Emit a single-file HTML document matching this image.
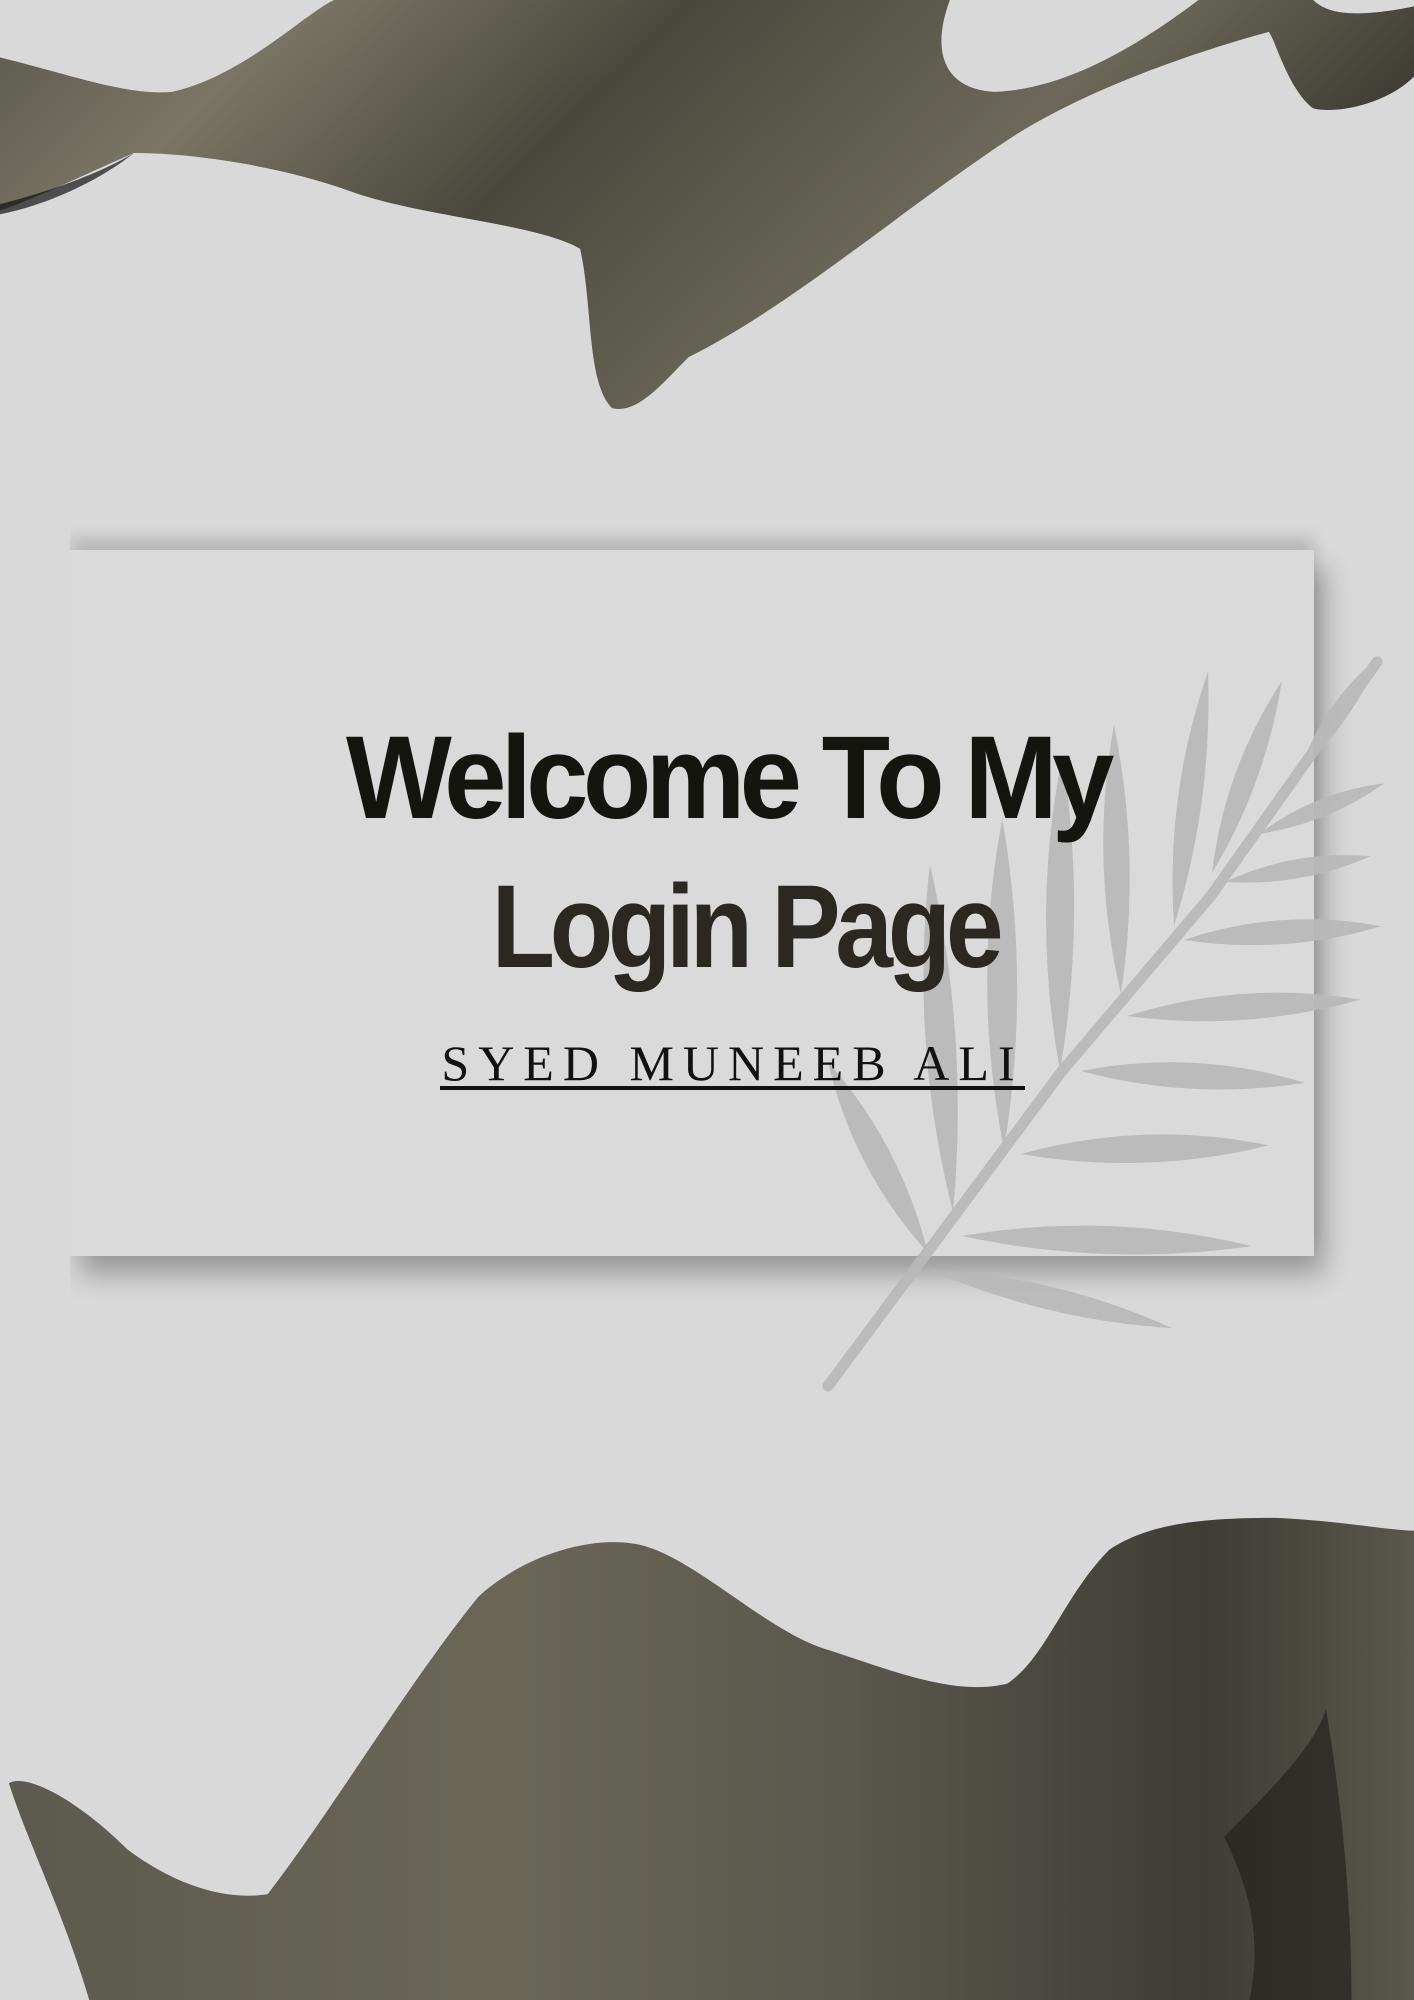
<!DOCTYPE html>
<html><head><meta charset="utf-8">
<style>
html,body{margin:0;padding:0;}
body{width:1414px;height:2000px;background:#d9d9d9;position:relative;overflow:hidden;font-family:"Liberation Sans",sans-serif;}
.card{position:absolute;left:70px;top:550px;width:1244px;height:706px;background:#dadada;
box-shadow:10px 18px 26px rgba(0,0,0,.30),0 -14px 14px rgba(0,0,0,.13);clip-path:inset(-40px -60px -90px 0);}
svg{position:absolute;left:0;top:0;}
.t{position:absolute;left:0;width:1414px;text-align:center;font-weight:bold;font-size:118px;letter-spacing:-6px;line-height:1;white-space:nowrap;}
.name{position:absolute;left:440px;top:1040px;width:585px;text-align:center;font-family:"Liberation Serif",serif;font-size:50px;letter-spacing:9px;text-indent:0px;color:#111;white-space:nowrap;border-bottom:4px solid #111;line-height:46px;padding-bottom:0;}
</style></head><body>
<div class="card"></div>
<svg width="1414" height="2000" viewBox="0 0 1414 2000">
<g fill="#b9b9b9" opacity="0.92">
<path d="M828,1386 L1062,1071 L1210,897 L1377,662" stroke="#b9b9b9" stroke-width="11" fill="none" stroke-linecap="round"/>
<path d="M0 0 Q125 -24 249 0 Q125 22 0 0Z" transform="translate(930,1270) rotate(13.5)"/>
<path d="M0 0 Q145 -30 290 0 Q145 26 0 0Z" transform="translate(962,1236) rotate(2)"/>
<path d="M0 0 Q124 -30 248 0 Q124 26 0 0Z" transform="translate(1021,1154) rotate(-2)"/>
<path d="M0 0 Q112 -28 224 0 Q112 24 0 0Z" transform="translate(1081,1071) rotate(3)"/>
<path d="M0 0 Q117 -28 234 0 Q117 24 0 0Z" transform="translate(1127,1016) rotate(-4)"/>
<path d="M0 0 Q99 -26 198 0 Q99 22 0 0Z" transform="translate(1184,940) rotate(-4)"/>
<path d="M0 0 Q74 -20 148 0 Q74 18 0 0Z" transform="translate(1225,882) rotate(-10)"/>
<path d="M0 0 Q68 -18 135 0 Q68 16 0 0Z" transform="translate(1259,834) rotate(-22)"/>
<path d="M0 0 Q108 -28 216 0 Q108 26 0 0Z" transform="translate(928,1253) rotate(-117.6)"/>
<path d="M0 0 Q174 -32 348 0 Q174 28 0 0Z" transform="translate(953,1212) rotate(-93.8)"/>
<path d="M0 0 Q165 -32 330 0 Q165 28 0 0Z" transform="translate(1004,1149) rotate(-90.3)"/>
<path d="M0 0 Q158 -30 315 0 Q158 26 0 0Z" transform="translate(1060,1071) rotate(-89.6)"/>
<path d="M0 0 Q135 -28 269 0 Q135 24 0 0Z" transform="translate(1121,994) rotate(-91.5)"/>
<path d="M0 0 Q128 -26 257 0 Q128 22 0 0Z" transform="translate(1174,926) rotate(-82.4)"/>
<path d="M0 0 Q102 -24 204 0 Q102 20 0 0Z" transform="translate(1212,873) rotate(-70)"/>
<path d="M0 0 Q70 -20 140 0 Q70 16 0 0Z" transform="translate(1300,770) rotate(-55)"/>
</g>
</svg>
<svg width="1414" height="2000" viewBox="0 0 1109 1568" preserveAspectRatio="none">
<defs>
<linearGradient id="g1" x1="0" y1="0" x2="1" y2="0.3">
<stop offset="0" stop-color="#5a584c"/><stop offset="0.2" stop-color="#7a7665"/><stop offset="0.45" stop-color="#4a483d"/><stop offset="0.75" stop-color="#6c695a"/><stop offset="1" stop-color="#3a382f"/>
</linearGradient>
<linearGradient id="g2" x1="0" y1="0" x2="1" y2="0">
<stop offset="0" stop-color="#5c5a4e"/><stop offset="0.35" stop-color="#6a6757"/><stop offset="0.6" stop-color="#5a584d"/><stop offset="0.85" stop-color="#3e3d34"/><stop offset="1" stop-color="#5a584c"/>
</linearGradient>
</defs>
<path fill="url(#g1)" d="M0,45 C60,60 100,75 135,72 C190,60 240,10 262,0 L745,0 C730,40 740,70 780,72 C840,70 900,30 940,0 L1030,0 C1040,10 1060,15 1109,5 L1109,60 C1090,80 1050,90 1030,85 C1010,70 1000,30 995,25 C940,40 850,70 790,110 C700,170 620,240 540,280 C520,300 500,325 480,320 C460,300 465,240 455,195 C420,175 330,170 275,150 C220,130 150,120 105,120 C70,135 30,155 0,165 Z"/>
<path fill="#111" opacity="0.7" d="M0,160 C40,150 80,135 105,120 C80,140 40,160 0,168Z"/>
<path fill="url(#g2)" d="M7,1398 C20,1390 60,1410 100,1450 C140,1480 180,1490 210,1485 C260,1420 320,1320 375,1252 C410,1220 460,1205 495,1210 C540,1215 600,1280 651,1294 C700,1310 750,1330 790,1320 C820,1300 835,1250 870,1215 C900,1195 940,1190 1000,1190 C1050,1192 1090,1200 1109,1200 L1109,1568 L70,1568 C50,1500 20,1440 7,1398 Z"/>
<path fill="#1e1d18" opacity="0.6" d="M960,1440 C1000,1400 1030,1370 1040,1340 C1050,1400 1060,1480 1060,1568 L980,1568 C990,1520 980,1480 960,1440Z"/>
</svg>
<div class="t" style="top:719px;color:#151510;transform:scaleX(0.95);transform-origin:1114px 0;">Welcome To My</div>
<div class="t" style="top:868px;color:#2a2820;transform:translateX(38px) scaleX(0.88);transform-origin:707px 0;">Login Page</div>
<div class="name">SYED MUNEEB ALI</div>
</body></html>
